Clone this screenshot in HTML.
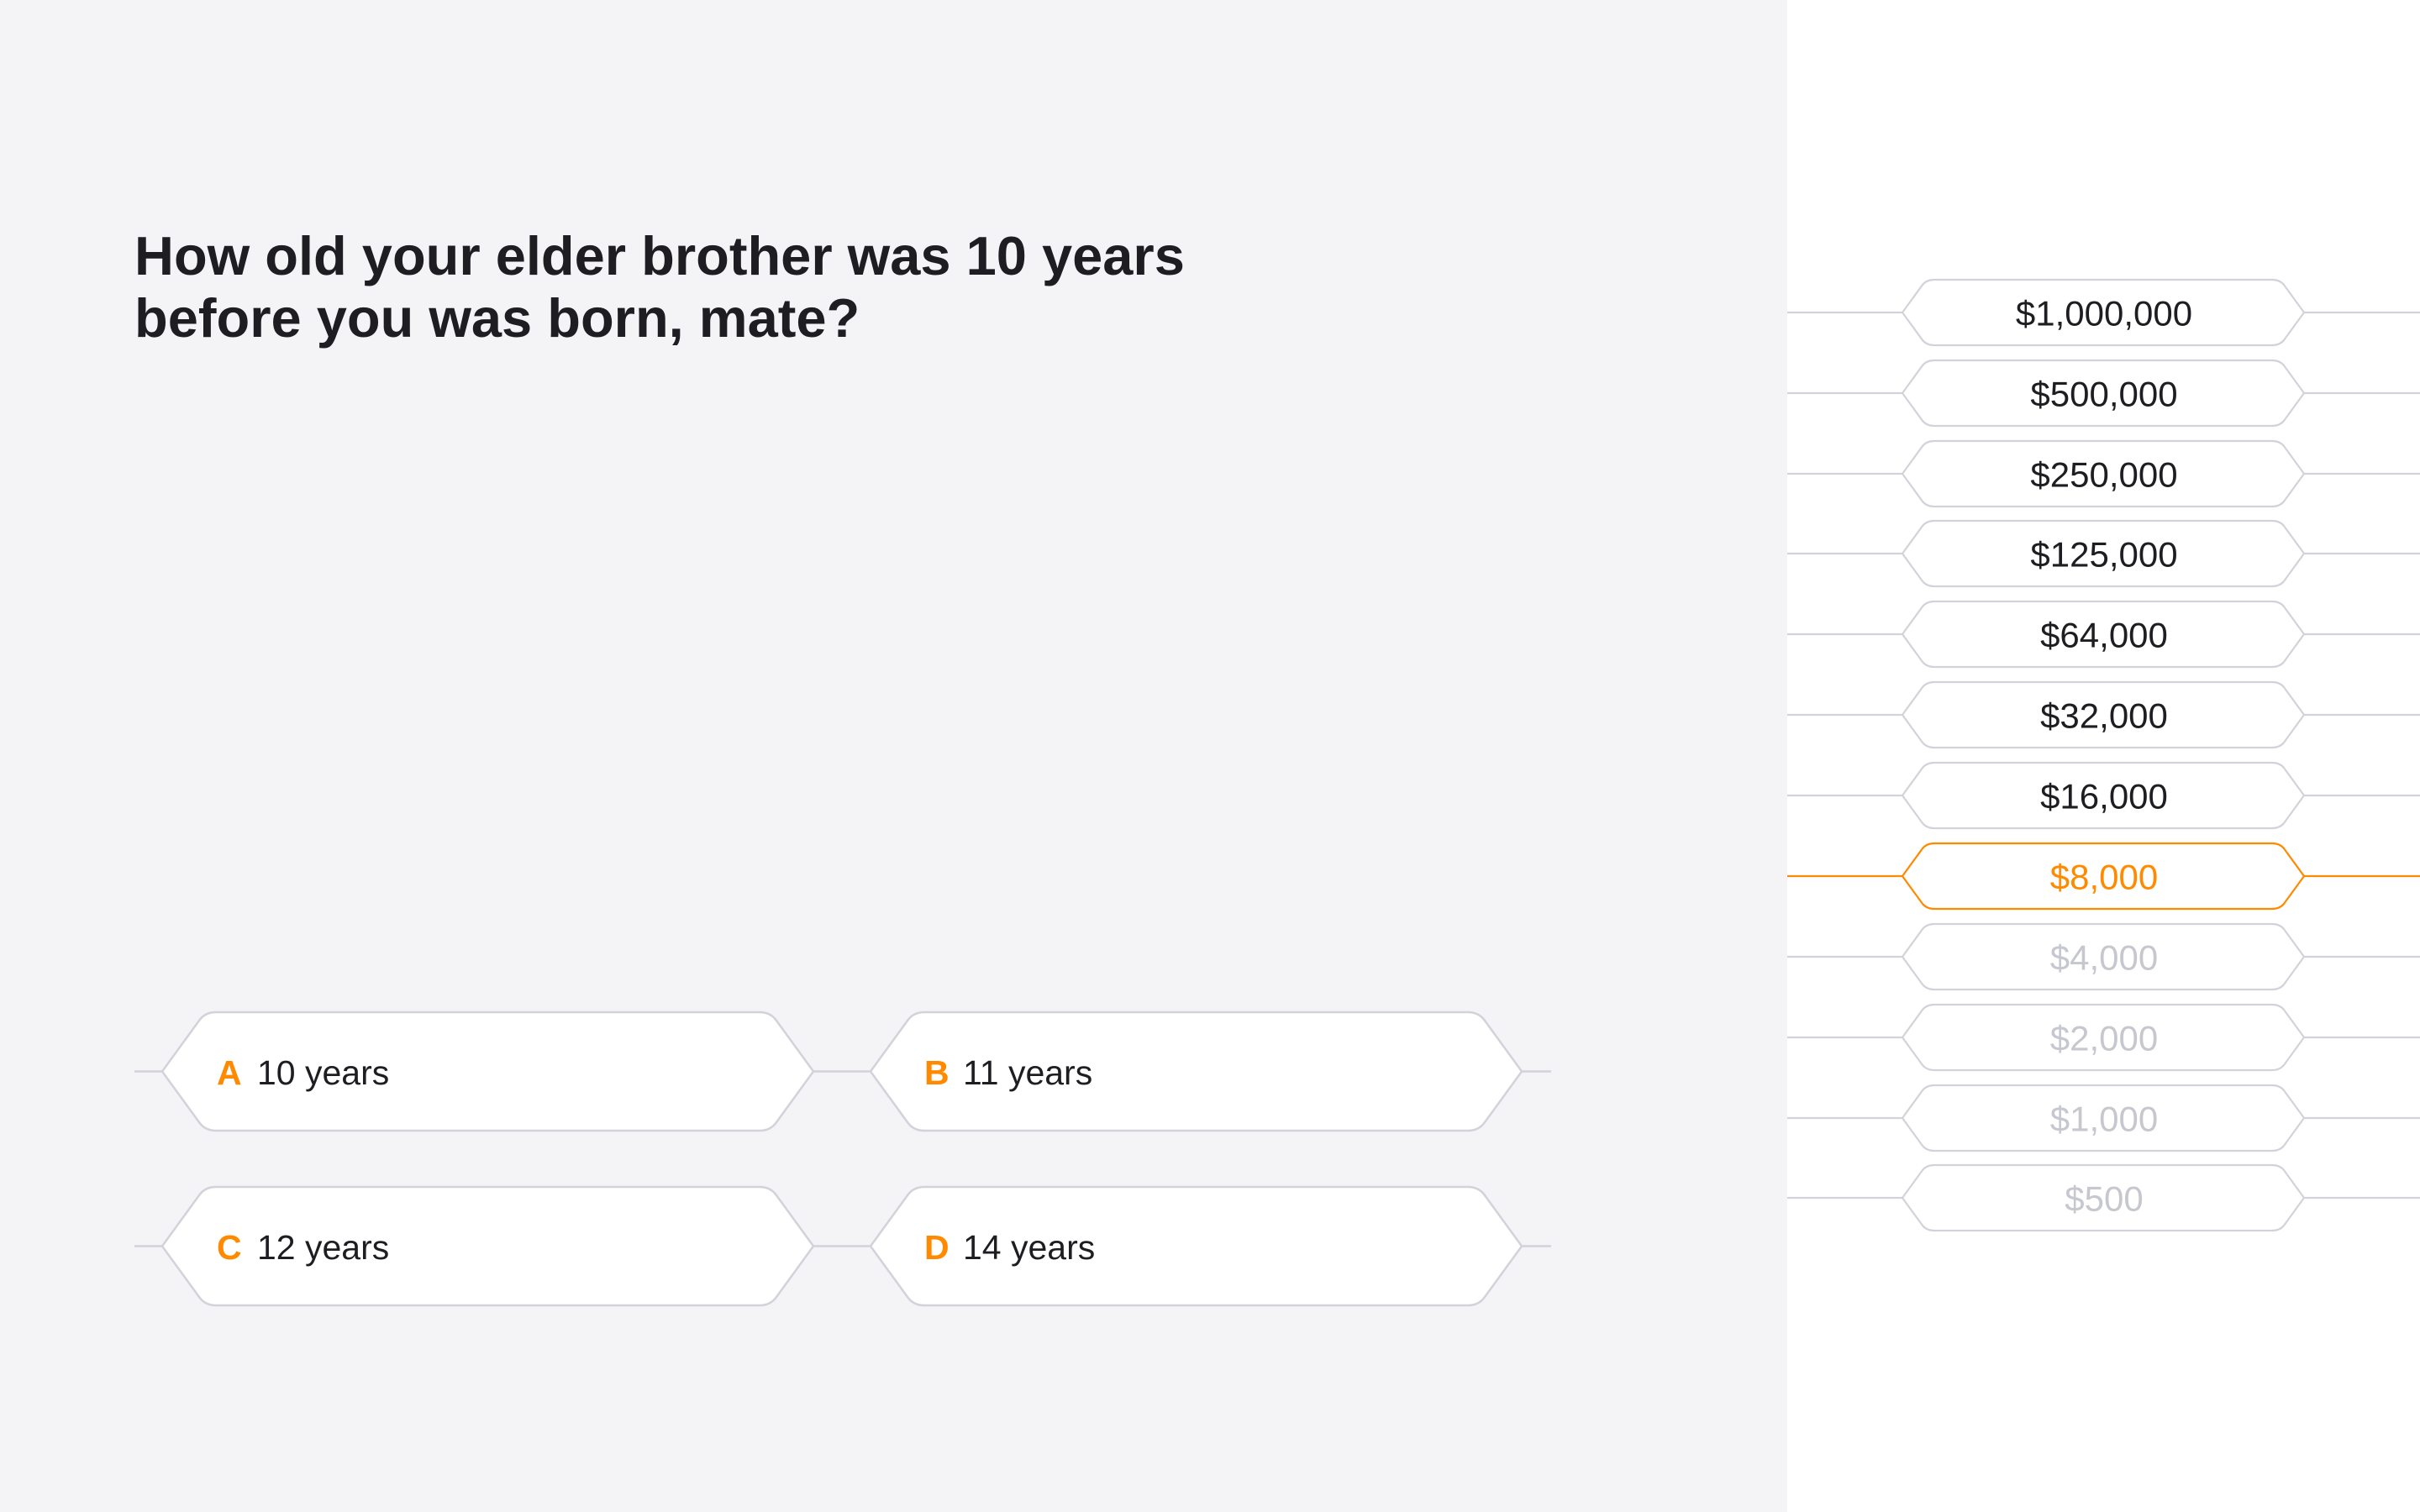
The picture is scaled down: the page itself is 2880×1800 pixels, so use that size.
<!DOCTYPE html>
<html><head><meta charset="utf-8"><style>
html,body{margin:0;padding:0;width:2880px;height:1800px;overflow:hidden;background:#fff;}
svg{display:block;font-family:"Liberation Sans",sans-serif;}
</style></head><body>
<svg width="2880" height="1800" viewBox="0 0 2880 1800" xmlns="http://www.w3.org/2000/svg">
<defs>
<path id="ans" d="M0,70.5 L44,10 Q51,0 64,0 L711,0 Q724,0 731,10 L775,70.5 L731,131 Q724,141 711,141 L64,141 Q51,141 44,131 Z"/>
<path id="pr" d="M0,39 L24,6 Q29,0 38,0 L440,0 Q449,0 454,6 L478,39 L454,72 Q449,78 440,78 L38,78 Q29,78 24,72 Z"/>
</defs>
<rect x="0" y="0" width="2127" height="1800" fill="#f4f4f6"/>
<text x="160" y="327" font-size="65" font-weight="bold" fill="#1e1e22">How old your elder brother was 10 years</text>
<text x="160" y="401" font-size="65" font-weight="bold" fill="#1e1e22">before you was born, mate?</text>

<g stroke="#d2d2da" stroke-width="2.5" fill="#fff">
<line x1="160" y1="1275.5" x2="193" y2="1275.5"/>
<line x1="968" y1="1275.5" x2="1036" y2="1275.5"/>
<line x1="1811" y1="1275.5" x2="1846" y2="1275.5"/>
<line x1="160" y1="1483.5" x2="193" y2="1483.5"/>
<line x1="968" y1="1483.5" x2="1036" y2="1483.5"/>
<line x1="1811" y1="1483.5" x2="1846" y2="1483.5"/>
<use href="#ans" x="193" y="1205"/>
<use href="#ans" x="1036" y="1205"/>
<use href="#ans" x="193" y="1413"/>
<use href="#ans" x="1036" y="1413"/>
</g>
<g font-size="41" dominant-baseline="central">
<text x="258" y="1277"><tspan fill="#ff8a00" font-weight="bold">A</tspan><tspan fill="#1e1e22" x="306">10 years</tspan></text>
<text x="1100" y="1277"><tspan fill="#ff8a00" font-weight="bold">B</tspan><tspan fill="#1e1e22" x="1146">11 years</tspan></text>
<text x="258" y="1485"><tspan fill="#ff8a00" font-weight="bold">C</tspan><tspan fill="#1e1e22" x="306">12 years</tspan></text>
<text x="1100" y="1485"><tspan fill="#ff8a00" font-weight="bold">D</tspan><tspan fill="#1e1e22" x="1146">14 years</tspan></text>
</g>

<g stroke-width="2.2" fill="#fff" font-size="42" text-anchor="middle" dominant-baseline="central">
<g stroke="#d2d2da"><line x1="2127" y1="372" x2="2264" y2="372"/><line x1="2742" y1="372" x2="2880" y2="372"/><use href="#pr" x="2264" y="333"/></g>
<text x="2504" y="373" fill="#1e1e22" stroke="none">$1,000,000</text>
<g stroke="#d2d2da"><line x1="2127" y1="468" x2="2264" y2="468"/><line x1="2742" y1="468" x2="2880" y2="468"/><use href="#pr" x="2264" y="429"/></g>
<text x="2504" y="469" fill="#1e1e22" stroke="none">$500,000</text>
<g stroke="#d2d2da"><line x1="2127" y1="564" x2="2264" y2="564"/><line x1="2742" y1="564" x2="2880" y2="564"/><use href="#pr" x="2264" y="525"/></g>
<text x="2504" y="565" fill="#1e1e22" stroke="none">$250,000</text>
<g stroke="#d2d2da"><line x1="2127" y1="659" x2="2264" y2="659"/><line x1="2742" y1="659" x2="2880" y2="659"/><use href="#pr" x="2264" y="620"/></g>
<text x="2504" y="660" fill="#1e1e22" stroke="none">$125,000</text>
<g stroke="#d2d2da"><line x1="2127" y1="755" x2="2264" y2="755"/><line x1="2742" y1="755" x2="2880" y2="755"/><use href="#pr" x="2264" y="716"/></g>
<text x="2504" y="756" fill="#1e1e22" stroke="none">$64,000</text>
<g stroke="#d2d2da"><line x1="2127" y1="851" x2="2264" y2="851"/><line x1="2742" y1="851" x2="2880" y2="851"/><use href="#pr" x="2264" y="812"/></g>
<text x="2504" y="852" fill="#1e1e22" stroke="none">$32,000</text>
<g stroke="#d2d2da"><line x1="2127" y1="947" x2="2264" y2="947"/><line x1="2742" y1="947" x2="2880" y2="947"/><use href="#pr" x="2264" y="908"/></g>
<text x="2504" y="948" fill="#1e1e22" stroke="none">$16,000</text>
<g stroke="#ff8a00"><line x1="2127" y1="1043" x2="2264" y2="1043"/><line x1="2742" y1="1043" x2="2880" y2="1043"/><use href="#pr" x="2264" y="1004"/></g>
<text x="2504" y="1044" fill="#ff8a00" stroke="none">$8,000</text>
<g stroke="#d2d2da"><line x1="2127" y1="1139" x2="2264" y2="1139"/><line x1="2742" y1="1139" x2="2880" y2="1139"/><use href="#pr" x="2264" y="1100"/></g>
<text x="2504" y="1140" fill="#c6c7cf" stroke="none">$4,000</text>
<g stroke="#d2d2da"><line x1="2127" y1="1235" x2="2264" y2="1235"/><line x1="2742" y1="1235" x2="2880" y2="1235"/><use href="#pr" x="2264" y="1196"/></g>
<text x="2504" y="1236" fill="#c6c7cf" stroke="none">$2,000</text>
<g stroke="#d2d2da"><line x1="2127" y1="1331" x2="2264" y2="1331"/><line x1="2742" y1="1331" x2="2880" y2="1331"/><use href="#pr" x="2264" y="1292"/></g>
<text x="2504" y="1332" fill="#c6c7cf" stroke="none">$1,000</text>
<g stroke="#d2d2da"><line x1="2127" y1="1426" x2="2264" y2="1426"/><line x1="2742" y1="1426" x2="2880" y2="1426"/><use href="#pr" x="2264" y="1387"/></g>
<text x="2504" y="1427" fill="#c6c7cf" stroke="none">$500</text>
</g>
</svg>
</body></html>
